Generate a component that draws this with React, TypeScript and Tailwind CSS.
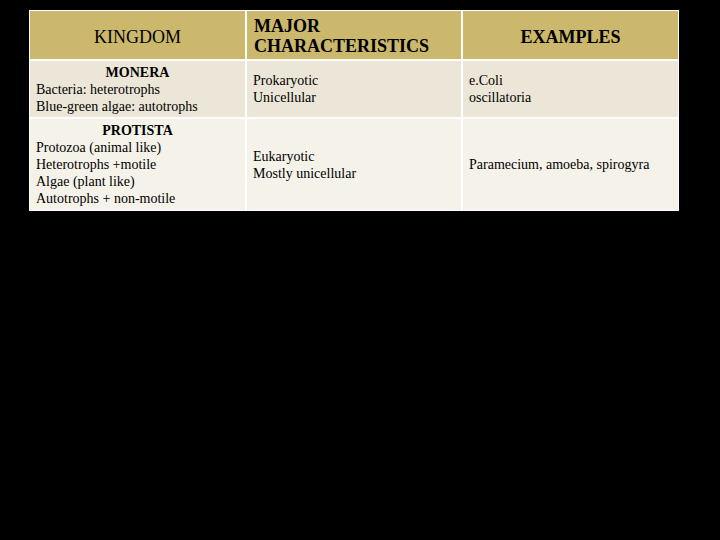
const rows = [
  {
    title: "MONERA",
    lines: ["Bacteria: heterotrophs", "Blue-green algae: autotrophs"],
    traits: ["Prokaryotic", "Unicellular"],
    examples: ["e.Coli", "oscillatoria"],
    bg: "bg-[#ebe6d7]",
    h: "h-[56px]",
  },
  {
    title: "PROTISTA",
    lines: [
      "Protozoa (animal like)",
      "Heterotrophs +motile",
      "Algae (plant like)",
      "Autotrophs + non-motile",
    ],
    traits: ["Eukaryotic", "Mostly unicellular"],
    examples: ["Paramecium, amoeba, spirogyra"],
    bg: "bg-[#f5f2ea]",
    h: "h-[91px]",
  },
];

export default function App() {
  return (
    <div className="w-[720px] h-[540px] bg-black pt-[10px] pl-[29px] text-black font-['Liberation_Serif','Times_New_Roman','DejaVu_Serif',serif]">
      <div className="w-[650px] bg-white p-[1px] grid grid-cols-[215px_214px_215px] gap-[2px]">
        {/* header */}
        <div className="h-[48px] bg-[#cbb86c] flex items-center justify-center pt-[3px] text-[18px] leading-[20px]">
          KINGDOM
        </div>
        <div className="h-[48px] bg-[#cbb86c] flex flex-col justify-center pt-[2px] px-[7px] text-[18px] leading-[20px] font-bold">
          <span>MAJOR</span>
          <span>CHARACTERISTICS</span>
        </div>
        <div className="h-[48px] bg-[#cbb86c] flex items-center justify-center pt-[3px] text-[18px] leading-[20px] font-bold">
          EXAMPLES
        </div>

        {rows.map((r) => (
          <div key={r.title} className="contents">
            <div
              className={`${r.bg} ${r.h} flex flex-col justify-center px-[6px] text-[14px] leading-[17px]`}
            >
              <span className="font-bold text-center">{r.title}</span>
              {r.lines.map((l) => (
                <span key={l}>{l}</span>
              ))}
            </div>
            <div
              className={`${r.bg} ${r.h} flex flex-col justify-center px-[6px] text-[14px] leading-[17px]`}
            >
              {r.traits.map((l) => (
                <span key={l}>{l}</span>
              ))}
            </div>
            <div
              className={`${r.bg} ${r.h} flex flex-col justify-center px-[6px] text-[14px] leading-[17px]`}
            >
              {r.examples.map((l) => (
                <span key={l}>{l}</span>
              ))}
            </div>
          </div>
        ))}
      </div>
    </div>
  );
}
